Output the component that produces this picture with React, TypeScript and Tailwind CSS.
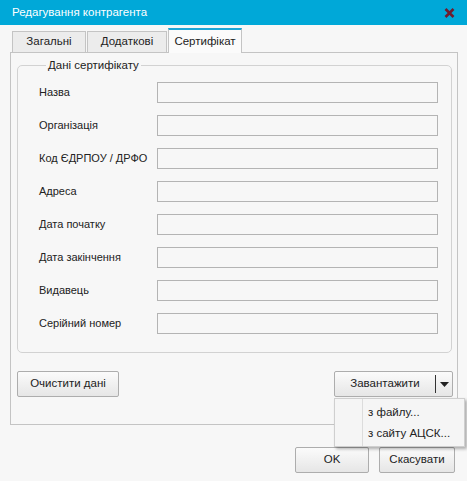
const fields = [
  "Назва",
  "Організація",
  "Код ЄДРПОУ / ДРФО",
  "Адреса",
  "Дата початку",
  "Дата закінчення",
  "Видавець",
  "Серійний номер",
];

function Button({ label, className }: { label: string; className?: string }) {
  return (
    <button
      className={`h-[26px] border border-[#adadad] rounded-[2px] bg-gradient-to-b from-[#fbfbfb] to-[#e6e6e6] text-[11.5px] text-[#222] whitespace-nowrap ${className ?? ""}`}
    >
      {label}
    </button>
  );
}

export default function App() {
  return (
    <div
      className="relative w-[467px] h-[481px] overflow-hidden bg-[#f7f7f7] flex flex-col whitespace-nowrap"
      style={{ fontFamily: '"Liberation Sans", Arial, sans-serif' }}
    >
      {/* title bar */}
      <div className="h-[25px] bg-[#00a8d8] flex items-center justify-between pl-[12px] pr-[12px]">
        <span className="text-white text-[11.5px] leading-none">Редагування контрагента</span>
        <svg width="11" height="10" viewBox="0 0 11 10">
          <path d="M1.5 1l8 8M9.5 1l-8 8" stroke="#6e1c2e" strokeWidth="2.6" />
        </svg>
      </div>

      <div className="pl-[10px] pr-[9px] pt-[3px]">
        {/* tabs */}
        <div className="flex items-end h-[24px] pl-[2px] text-[11.5px] text-[#222]">
          <div className="w-[74px] h-[21px] border border-b-0 border-[#c4c4c4] bg-[#ececec] flex items-center justify-center">
            Загальні
          </div>
          <div className="ml-px w-[80px] h-[21px] border border-b-0 border-[#c4c4c4] bg-[#ececec] flex items-center justify-center">
            Додаткові
          </div>
          <div className="ml-px w-[74px] h-[25px] -mb-px border border-b-0 border-[#c4c4c4] border-t-2 border-t-[#1ea6d6] bg-[#fbfbfb] flex items-center justify-center relative z-10">
            Сертифікат
          </div>
        </div>

        {/* tab panel */}
        <div className="h-[373px] border border-[#c4c4c4] pl-[6px] pr-[4px] pt-[7px] flex flex-col">
          <fieldset className="h-[293px] mr-px border border-[#d2d2d2] rounded-[5px] pl-[21px] pr-[13px] pt-[4px]">
            <legend className="ml-[7px] px-[2px] text-[11.5px] text-[#222] leading-none">Дані сертифікату</legend>
            <div className="flex flex-col gap-[12px] pt-[6px]">
              {fields.map((f) => (
                <div key={f} className="flex items-center h-[21px]">
                  <span className="w-[118px] text-[11px] text-[#222]">{f}</span>
                  <div className="flex-1 h-[21px] border border-[#b4b4b4] bg-[#f7f7f7]" />
                </div>
              ))}
            </div>
          </fieldset>

          <div className="flex justify-between items-center mt-[18px]">
            <Button label="Очистити дані" className="w-[102px]" />
            <div className="w-[119px] h-[26px] border border-[#adadad] rounded-[2px] bg-gradient-to-b from-[#fbfbfb] to-[#e6e6e6] flex items-center text-[11.5px] text-[#222]">
              <span className="flex-1 text-center">Завантажити</span>
              <span className="w-px h-[18px] bg-[#333]" />
              <span className="w-[16px] flex justify-center">
                <svg width="9" height="5" viewBox="0 0 9 5">
                  <path d="M0 0h9L4.5 5z" fill="#222" />
                </svg>
              </span>
            </div>
          </div>
        </div>
      </div>

      {/* bottom buttons */}
      <div className="flex justify-end gap-[10px] pr-[12px] mt-[22px]">
        <Button label="OK" className="w-[74px]" />
        <Button label="Скасувати" className="w-[76px]" />
      </div>

      {/* dropdown menu */}
      <div className="absolute left-[334px] top-[398px] w-[131px] h-[49px] bg-[#f5f5f5] border border-[#cfcfcf] shadow-[2px_2px_3px_rgba(0,0,0,0.3)] flex">
        <div className="w-[28px] border-r border-[#dcdcdc]" />
        <div className="flex flex-col justify-center gap-[7px] pl-[5px] text-[11.5px] text-[#222] leading-[14px]">
          <span>з файлу...</span>
          <span>з сайту АЦСК...</span>
        </div>
      </div>
    </div>
  );
}
